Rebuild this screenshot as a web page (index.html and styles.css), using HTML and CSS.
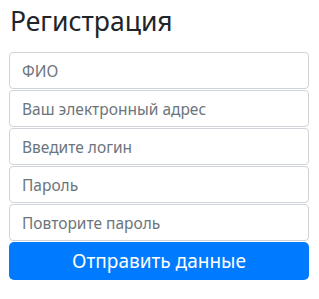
FILE: index.html
```html
<!DOCTYPE html>
<html lang="ru">
<head>
    <meta charset="UTF-8">
    <meta name="viewport" content="width=device-width, initial-scale=1.0">
    <title>Регистрация</title>
    <link rel="stylesheet" href="styles.css">
</head>
<body>
    <div class="register">
        <h1>Регистрация</h1>
        <form class="register-form">
            <input type="text" placeholder="ФИО">
            <input type="email" placeholder="Ваш электронный адрес">
            <input type="text" placeholder="Введите логин">
            <input type="password" placeholder="Пароль">
            <input type="password" placeholder="Повторите пароль">
            <button type="submit" class="submit-btn">Отправить данные</button>
        </form>
    </div>
</body>
</html>
```

FILE: styles.css
```css
* {
    margin: 0;
    padding: 0;
    box-sizing: border-box;
}

body {
    font-family: "Noto Sans", Arial, sans-serif;
    background: #fff;
    color: #212529;
}

.register {
    padding: 5px 10px 0 9px;
}

.register h1 {
    font-size: 26.5px;
    font-weight: 400;
    line-height: 32px;
    padding-left: 1px;
    margin-bottom: 15px;
}

.register-form {
    display: flex;
    flex-direction: column;
    gap: 1px;
}

.register-form input {
    height: 37px;
    padding: 0 12px;
    border: 1px solid #ced4da;
    border-radius: 4px;
    font-family: inherit;
    font-size: 15.5px;
    color: #495057;
}

.register-form input::placeholder {
    color: #6c757d;
}

.submit-btn {
    height: 38px;
    border: none;
    border-radius: 5px;
    background: #007bff;
    color: #fff;
    font-family: inherit;
    font-size: 19px;
    cursor: pointer;
}
```
